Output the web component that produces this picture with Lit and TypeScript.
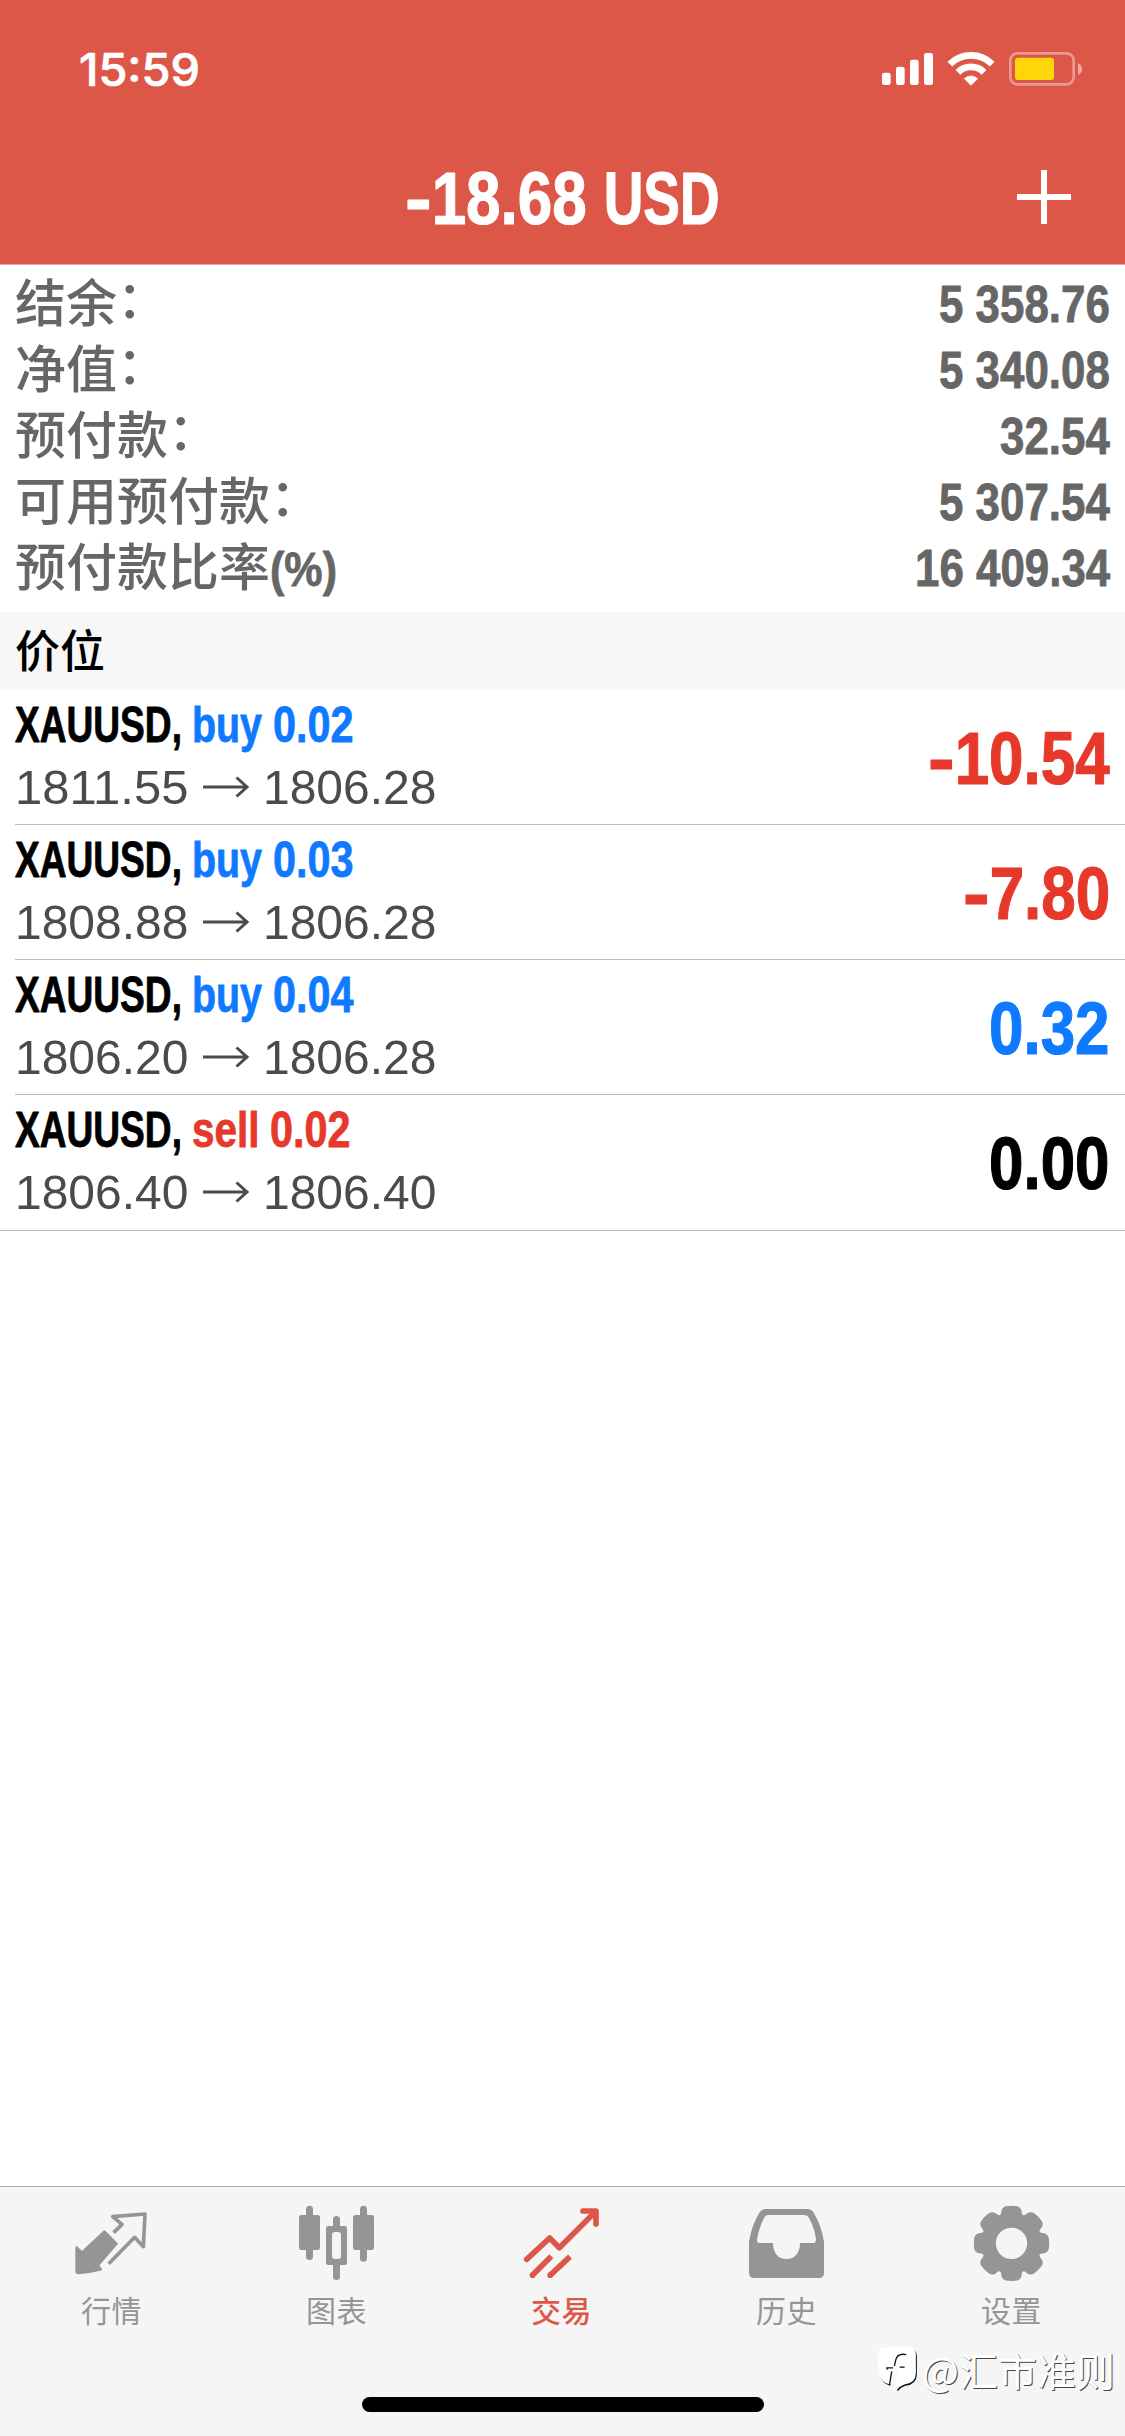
import { LitElement, html, svg, css } from "lit";
import { customElement, property } from "lit/decorators.js";

type Run = [text: string, advance: number];

const FACES: Record<string, { family: string; weight: number }> = {
  bold: { family: '"Liberation Sans", Arial, sans-serif', weight: 700 },
  regular: { family: '"Liberation Sans", Arial, sans-serif', weight: 400 },
  clock: { family: "Inter, sans-serif", weight: 500 },
};

const pen = document.createElement("canvas").getContext("2d")!;

/* Condensed lettering: each run is squeezed to its own advance width; the
   box is as tall as the capitals, so its lower edge is the baseline. */
@customElement("condensed-text")
class CondensedText extends LitElement {
  static styles = css`
    :host { display: inline-block; line-height: 0; }
    svg { display: block; overflow: visible; }
    text { fill: currentColor; stroke: currentColor; stroke-linejoin: round; }
  `;
  @property({ attribute: false }) runs: Run[] = [];
  @property({ type: Number }) size = 50;
  @property({ type: Number }) cap = 35;
  @property() face = "bold";

  render() {
    const { family, weight } = FACES[this.face];
    pen.font = `${weight} ${this.size}px ${family}`;
    let x = 0;
    const parts = this.runs.map(([text, advance]) => {
      const at = x;
      x += advance;
      if (text === " ") return null;
      const squeeze = advance / pen.measureText(text).width;
      const stroke = this.face === "regular" ? 0 : this.size * 0.016;
      return svg`<text transform="translate(${at} ${this.cap}) scale(${squeeze} 1)"
        font-family=${family} font-weight=${weight} font-size=${this.size}
        stroke-width=${stroke}>${text}</text>`;
    });
    return html`<svg width=${x} height=${this.cap}>${parts}</svg>`;
  }
}

const DIGIT = 0.4785;

/* Splits an amount into its sign and its figures, with widths for a font of the given em. */
function amountRuns(value: string, em: number): Run[] {
  const runs: Run[] = [];
  let figures = value;
  if (value.startsWith("-")) {
    runs.push(["-", em * 0.37]);
    figures = value.slice(1);
  }
  let width = 0;
  for (const c of figures) width += c === "." || c === " " ? DIGIT / 2 : DIGIT;
  runs.push([figures, width * em]);
  return runs;
}

const summary = [
  { label: "结余", colon: true, value: "5 358.76" },
  { label: "净值", colon: true, value: "5 340.08" },
  { label: "预付款", colon: true, value: "32.54" },
  { label: "可用预付款", colon: true, value: "5 307.54" },
  { label: "预付款比率", suffix: "(%)", value: "16 409.34" },
];

const positions = [
  { side: "buy", lots: "0.02", open: "1811.55", now: "1806.28", profit: "-10.54", tone: "loss" },
  { side: "buy", lots: "0.03", open: "1808.88", now: "1806.28", profit: "-7.80", tone: "loss" },
  { side: "buy", lots: "0.04", open: "1806.20", now: "1806.28", profit: "0.32", tone: "gain" },
  { side: "sell", lots: "0.02", open: "1806.40", now: "1806.40", profit: "0.00", tone: "flat" },
];

function gearPath(cx: number, cy: number): string {
  const p = (r: number, deg: number) => {
    const a = (deg * Math.PI) / 180;
    return `${(cx + r * Math.cos(a)).toFixed(1)} ${(cy + r * Math.sin(a)).toFixed(1)}`;
  };
  let d = `M${p(103, -17)}`;
  for (let a = 0; a < 360; a += 45) {
    d += `Q${p(112, a - 14)} ${p(113, a - 9)}A113 113 0 0 1 ${p(113, a + 9)}`;
    d += `Q${p(112, a + 14)} ${p(103, a + 17)}Q${p(80, a + 22.5)} ${p(103, a + 28)}`;
  }
  return d + `Z M${cx + 47} ${cy}a47 47 0 1 0 -94 0a47 47 0 1 0 94 0Z`;
}

const tabs = [
  {
    label: "行情",
    box: "0 90 675 255",
    icon: svg`
      <path fill="currentColor" stroke="currentColor" stroke-width="8" stroke-linejoin="round"
        d="M313 185 L349 221 L293 286 L302 298 Q270 307 235 309 L230 306 L230 233 L246 248 Z"/>
      <path fill="none" stroke="currentColor" stroke-width="11" stroke-linejoin="round"
        d="M341 188 L366 163 L338 140 L435 132 L430 230 L404 202 L326 281"/>`,
  },
  {
    label: "图表",
    box: "675 90 675 255",
    icon: svg`<g fill="currentColor">
      <rect x="918" y="107" width="21" height="163" rx="10.5"/>
      <rect x="897" y="135" width="63" height="105" rx="7"/>
      <path d="M999 175V148.500a10.500 10.500 0 0 1 21 0V175ZM999 278V319.500a10.500 10.500 0 0 0 21 0V278Z"/>
      <path fill-rule="evenodd" d="M985 168h49q7 0 7 7v103q0 7-7 7h-49q-7 0-7-7V175q0-7 7-7ZM1005 186q-9 0-9 9v63q0 9 9 9h9q9 0 9-9v-63q0-9-9-9Z"/>
      <rect x="1080" y="107" width="21" height="168" rx="10.5"/>
      <rect x="1059" y="135" width="63" height="105" rx="7"/></g>`,
  },
  {
    label: "交易",
    active: true,
    box: "150 90 675 255",
    icon: svg`<g fill="none" stroke="currentColor" stroke-width="17" stroke-linejoin="round">
      <path stroke-linecap="round" d="M380 268 L449 204 L478 233 L586 125"/>
      <path stroke-linecap="round" d="M549 123 H588 V162"/>
      <path d="M397 316 L454 259 M450 316 L510 260"/></g>
      <circle cx="397.500" cy="315.500" r="8.500" fill="currentColor"/>
      <circle cx="450.500" cy="315.500" r="8.500" fill="currentColor"/>`,
  },
  {
    label: "历史",
    box: "825 90 675 255",
    icon: svg`<path fill="currentColor" fill-rule="evenodd" d="M1047 215 Q1055 165 1078 128 Q1085 117 1097 117 H1222 Q1234 117 1241 128 Q1264 165 1272 215 V309 Q1272 324 1257 324 H1062 Q1047 324 1047 309Z
      M1105 135 H1214 Q1222 135 1227 143 Q1244 175 1248 208 Q1248 219 1240 219 H1200 C1200 250 1184 267 1159.500 267 C1135 267 1119 250 1119 219 H1079 Q1071 219 1071 210 Q1077 170 1094 141 Q1097 135 1105 135Z"/>`,
  },
  {
    label: "设置",
    box: "300 90 675 255",
    icon: svg`<path fill="currentColor" fill-rule="evenodd" d=${gearPath(634.5, 220)}/>`,
  },
];

@customElement("app-root")
class AppRoot extends LitElement {
  static styles = css`
    :host {
      display: block;
      font-family: "Liberation Sans", "Noto Sans CJK SC", sans-serif;
    }
    .screen {
      position: relative;
      display: flex;
      flex-direction: column;
      width: 1125px;
      height: 2436px;
      background: #fff;
      overflow: hidden;
    }
    svg { display: block; }
    .header {
      height: 265px;
      box-sizing: border-box;
      padding-top: 40px;
      background: #dd5748;
      border-bottom: 1px solid #dfa9a3;
      color: #fff;
      flex: none;
    }
    .status {
      display: flex;
      justify-content: space-between;
      align-items: flex-start;
      height: 60px;
      padding: 0 30px 0 79px;
    }
    .clock { margin-top: 13px; }
    .title-bar {
      display: grid;
      grid-template-columns: 1fr auto 1fr;
      align-items: end;
      height: 124px;
      padding: 0 54px;
    }
    .title { grid-column: 2; }
    .add { justify-self: end; }
    .summary {
      flex: none;
      box-sizing: border-box;
      height: 347px;
      padding: 2px 15px 0;
      color: #666;
    }
    .summary-row {
      display: flex;
      justify-content: space-between;
      align-items: baseline;
      height: 66px;
      line-height: 66px;
      font-size: 51px;
      font-weight: 500;
    }
    .label { font-family: "Noto Sans CJK SC", sans-serif; white-space: nowrap; }
    .colon { position: relative; top: -4px; }
    .section {
      flex: none;
      box-sizing: border-box;
      height: 78px;
      padding: 0 15px 5px;
      font: 500 45px/73px "Noto Sans CJK SC", sans-serif;
      color: #000;
      background: #f7f7f7;
    }
    .position { display: flex; flex-direction: column; flex: none; }
    .position-body {
      display: flex;
      justify-content: space-between;
      align-items: flex-start;
      box-sizing: border-box;
      height: 134px;
      padding: 17px 15px 0;
    }
    .rule { height: 1px; margin-left: 15px; background: #bdbdbf; }
    .rule.full { margin-left: 0; margin-top: 1px; }
    .order { display: flex; align-items: flex-end; color: #000; }
    .order .side { margin-left: 9.5px; }
    .order .lots { margin-left: 11px; }
    .buy, .gain { color: #0f7aff; }
    .sell, .loss { color: #e6392b; }
    .flat { color: #000; }
    .prices { display: flex; align-items: flex-end; margin-top: 28px; color: #4b4b4f; }
    .arrow { margin: 0 13px; }
    .profit { margin-top: 26px; }
    .spacer { flex: 1; }
    .footer {
      flex: none;
      box-sizing: border-box;
      height: 250px;
      border-top: 1px solid #ababab;
      background: #f5f5f5;
    }
    .tabs { display: grid; grid-template-columns: repeat(5, 225px); }
    .tab { padding-top: 13px; color: #959595; text-align: center; }
    .tab.active { color: #dd5748; }
    .tab-label {
      margin: 4px 2px 0 0;
      font: 400 30px/40px "Noto Sans CJK SC", sans-serif;
      letter-spacing: 0.5px;
    }
    .active .tab-label { font-weight: 500; }
    .home {
      width: 402px;
      height: 15px;
      margin: 68px auto 0;
      border-radius: 8px;
      background: #000;
    }
    .watermark {
      position: absolute;
      left: 875px;
      top: 2342px;
      display: flex;
      align-items: center;
      gap: 2px;
      color: #fff;
      font: 400 39px/54px "Noto Sans CJK SC", sans-serif;
      text-shadow: 1px 1px 0 #444;
      white-space: nowrap;
    }
  `;

  render() {
    return html`<div class="screen">
      <div class="header">
        <div class="status">
          <condensed-text class="clock" face="clock" .runs=${[["15:59", 121]]} size="45" cap="32.500"></condensed-text>
          <svg width="220" height="60" viewBox="0 0 660 180" fill="#fff">
            <rect x="21" y="98" width="26" height="37" rx="7"/>
            <rect x="63" y="80" width="26" height="55" rx="7"/>
            <rect x="105" y="59" width="26" height="76" rx="7"/>
            <rect x="147" y="39" width="27" height="96" rx="7"/>
            <g fill="none" stroke="#fff" stroke-width="20">
              <path d="M224.400 72.400a90 90 0 0 1 127.200 0"/>
              <path d="M248.800 96.800a55.500 55.500 0 0 1 78.400 0"/>
            </g>
            <path d="M288 136L268 116a28.300 28.300 0 0 1 40 0Z" stroke="#fff" stroke-width="2" stroke-linejoin="round"/>
            <rect x="406" y="40" width="190" height="93" rx="21" fill="none" stroke="#fff" stroke-opacity=".4" stroke-width="8"/>
            <rect x="420" y="53" width="117" height="67" rx="9" fill="#ffd60a"/>
            <path d="M609 70q12 5 12 17.500t-12 17.500Z" fill-opacity=".5"/>
          </svg>
        </div>
        <div class="title-bar">
          <condensed-text class="title" .runs=${[...amountRuns("-18.68", 72), [" ", 17], ["USD", 116]]}
            size="74" cap="52"></condensed-text>
          <svg class="add" width="54" height="54"><path d="M27 0V54M0 27H54" stroke="#fff" stroke-width="6"/></svg>
        </div>
      </div>

      <div class="summary">
        ${summary.map(
          (row) => html`<div class="summary-row">
            <span class="label">${row.label}${row.colon ? html`<span class="colon">：</span>` : null}${row.suffix
              ? html`<condensed-text .runs=${[[row.suffix, 67]]} size="49" cap="36"></condensed-text>`
              : null}</span>
            <condensed-text .runs=${amountRuns(row.value, 51)} size="52" cap="36"></condensed-text>
          </div>`,
        )}
      </div>

      <div class="section">价位</div>
      ${positions.map(
        (p, i) => html`<div class="position">
          <div class="position-body">
            <div>
              <div class="order">
                <condensed-text .runs=${[["XAUUSD,", 167]]} size="49.500" cap="35"></condensed-text>
                <condensed-text class="side ${p.side}" .runs=${[[p.side, p.side === "buy" ? 70 : 67.5]]} size="49.500" cap="35"></condensed-text>
                <condensed-text class="lots ${p.side}" .runs=${[[p.lots, 80.5]]} size="49.500" cap="35"></condensed-text>
              </div>
              <div class="prices">
                <condensed-text face="regular" .runs=${[[p.open, 173.5]]} size="48.500" cap="34"></condensed-text>
                <svg class="arrow" width="48" height="34" fill="none" stroke="currentColor" stroke-width="3">
                  <path d="M1 17H46M34.500 7.500L45 17L34.500 26.500"/>
                </svg>
                <condensed-text face="regular" .runs=${[[p.now, 173.5]]} size="48.500" cap="34"></condensed-text>
              </div>
            </div>
            <condensed-text class="profit ${p.tone}" .runs=${amountRuns(p.profit, 72)} size="73.500" cap="51"></condensed-text>
          </div>
          <div class="rule ${i === positions.length - 1 ? "full" : ""}"></div>
        </div>`,
      )}

      <div class="spacer"></div>
      <div class="footer">
        <div class="tabs">
          ${tabs.map(
            (t) => html`<div class="tab ${t.active ? "active" : ""}">
              <svg width="225" height="85" viewBox=${t.box}>${t.icon}</svg>
              <div class="tab-label">${t.label}</div>
            </div>`,
          )}
        </div>
        <div class="home"></div>
      </div>

      <div class="watermark">
        <svg width="45" height="48" viewBox="30 50 135 145">
          <path fill="#111" transform="translate(3 4)"
            d="M62 57H131Q153 57 153 80V135Q152 166 118 169Q103 174 95 186L90 170Q45 170 39 130V80Q39 57 62 57Z"/>
          <path fill="#fff"
            d="M62 57H131Q153 57 153 80V135Q152 166 118 169Q103 174 95 186L90 170Q45 170 39 130V80Q39 57 62 57Z"/>
          <path fill="#f7f7f7" d="M84 126H97L91 186L76 172Z"/>
          <path fill="none" stroke="#111" stroke-width="4"
            d="M124 79Q97 74 92 96L88 114M66 125V119H84M80 130L73 172M104 117H119"/>
        </svg>
        <span>@汇市准则</span>
      </div>
    </div>`;
  }
}
